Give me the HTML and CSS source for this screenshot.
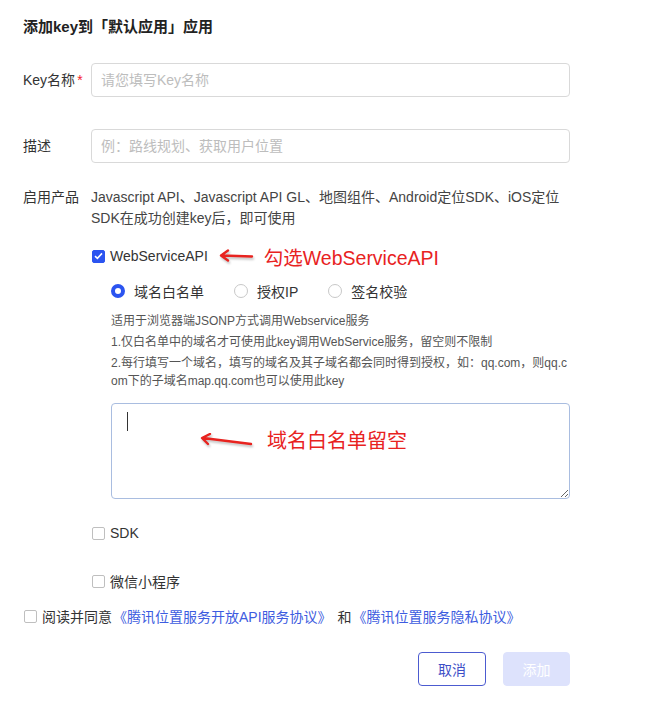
FILE: index.html
```html
<!DOCTYPE html>
<html lang="zh-CN">
<head>
<meta charset="UTF-8" />
<title>添加key</title>
<link rel="stylesheet" href="styles.css">
</head>
<body>

<div class="dialog">
  <h2 class="title">添加key到「默认应用」应用</h2>

  <div class="row row-name">
    <label class="label">Key名称<span class="req">*</span></label>
    <div class="field"><input class="input" type="text" placeholder="请您填写Key名称"></div>
  </div>

  <div class="row row-desc">
    <label class="label">描述</label>
    <div class="field"><input class="input" type="text" placeholder="例：路线规划、获取用户位置"></div>
  </div>

  <div class="row row-prod">
    <label class="label">启用产品</label>
    <div class="field">
      <p class="prod-text">Javascript API、Javascript API GL、地图组件、Android定位SDK、iOS定位SDK在成功创建key后，即可使用</p>

      <div class="check check-ws">
        <span class="box checked"><svg width="9" height="8" viewBox="0 0 9 8"><path d="M1 4.2 L3.4 6.4 L8 1.4" fill="none" stroke="#fff" stroke-width="1.6"/></svg></span>
        <span>WebServiceAPI</span>
        <span class="note note-ws">
          <svg width="36" height="14" viewBox="0 0 36 14"><path d="M34 7.5 L4 6.5 M10 1.5 L3 6.5 L10 11.5" fill="none" stroke="#e8231f" stroke-width="2.4" stroke-linecap="round" stroke-linejoin="round"/></svg>
          <span class="note-text">勾选WebServiceAPI</span>
        </span>
      </div>

      <div class="ws-panel">
        <div class="radios">
          <span class="radio on"></span><span class="radio-label">域名白名单</span>
          <span class="radio"></span><span class="radio-label">授权IP</span>
          <span class="radio"></span><span class="radio-label">签名校验</span>
        </div>
        <p class="tip">适用于浏览器端JSONP方式调用Webservice服务</p>
        <p class="tip">1.仅白名单中的域名才可使用此key调用WebService服务，留空则不限制</p>
        <p class="tip">2.每行填写一个域名，填写的域名及其子域名都会同时得到授权，如：qq.com，则qq.com下的子域名map.qq.com也可以使用此key</p>
        <div class="area-wrap">
          <textarea class="area"></textarea>
          <span class="caret"></span>
          <span class="note note-area">
            <svg width="54" height="14" viewBox="0 0 54 14"><path d="M52 11 L4 5 M11 1 L3 5 L9 11" fill="none" stroke="#e8231f" stroke-width="2.4" stroke-linecap="round" stroke-linejoin="round"/></svg>
            <span class="note-text">域名白名单留空</span>
          </span>
        </div>
      </div>

      <div class="check check-sdk"><span class="box"></span><span>SDK</span></div>
      <div class="check check-mini"><span class="box"></span><span>微信小程序</span></div>
    </div>
  </div>

  <div class="check check-agree">
    <span class="box"></span><span>阅读并同意</span>
    <a class="link" href="#">《腾讯位置服务开放API服务协议》</a>
    <span class="and">和</span>
    <a class="link" href="#">《腾讯位置服务隐私协议》</a>
  </div>

  <div class="actions">
    <button class="btn btn-cancel">取消</button>
    <button class="btn btn-add">添加</button>
  </div>
</div>

</body>
</html>
```

FILE: styles.css
```css
body {
  margin: 0;
  padding: 0;
  background: #fff;
  color: #333;
  font-family: "Liberation Sans", "Noto Sans CJK SC", sans-serif;
  font-size: 14px;
}
.dialog {
  width: 547px;
  padding: 16px 0 0 23px;
}
.title {
  margin: 0;
  font-size: 15px;
  line-height: 22px;
  font-weight: bold;
  color: #222;
}
.row {
  display: flex;
}
.label {
  width: 68px;
  flex: none;
  line-height: 34px;
  color: #333;
}
.req {
  color: #f5222d;
  margin-left: 2px;
}
.field {
  flex: 1;
}
.row-name {
  margin-top: 25px;
}
.row-desc {
  margin-top: 32px;
}
.row-prod {
  margin-top: 24px;
}
.row-prod .label {
  line-height: 21px;
}
.input {
  box-sizing: border-box;
  width: 100%;
  height: 34px;
  border: 1px solid #d9d9d9;
  border-radius: 4px;
  padding: 0 9px;
  font-family: inherit;
  font-size: 14px;
  outline: none;
}
.input::placeholder {
  color: #bdbdbd;
}
.prod-text {
  margin: 0;
  line-height: 21px;
  color: #444;
}
.check {
  display: flex;
  align-items: center;
  height: 20px;
  color: #333;
}
.box {
  box-sizing: border-box;
  width: 13px;
  height: 13px;
  border: 1px solid #bfbfbf;
  border-radius: 2px;
  margin: 0 5px 0 1px;
  display: inline-flex;
  align-items: center;
  justify-content: center;
  flex: none;
}
.box.checked {
  background: #2b54f0;
  border-color: #2b54f0;
}
.check-ws {
  margin-top: 17px;
}
.note {
  display: inline-flex;
  align-items: center;
  color: #e8231f;
}
.note-text {
  font-size: 19.5px;
}
.note-ws {
  margin-left: 10px;
}
.note-ws svg {
  margin-right: 10px;
  filter: drop-shadow(1px 2px 1px rgba(0,0,0,0.25));
}
.ws-panel {
  padding-left: 20px;
}
.radios {
  display: flex;
  align-items: center;
  height: 20px;
  margin-top: 15px;
  margin-bottom: 11px;
}
.radio {
  box-sizing: border-box;
  width: 14px;
  height: 14px;
  border-radius: 50%;
  border: 1px solid #c8c8c8;
  margin-right: 9px;
}
.radio.on {
  border: 4px solid #2b54f0;
}
.radio-label {
  margin-right: 30px;
}
.tip {
  margin: 0 0 3px;
  font-size: 12px;
  line-height: 18px;
  color: #555;
  word-break: break-all;
}
.area-wrap {
  position: relative;
  margin-top: 13px;
}
.area {
  display: block;
  box-sizing: border-box;
  width: 100%;
  height: 96px;
  border: 1px solid #a9bde0;
  border-radius: 4px;
  outline: none;
  font-family: inherit;
}
.caret {
  position: absolute;
  left: 16px;
  top: 9px;
  width: 1px;
  height: 19px;
  background: #333;
}
.note-area {
  position: absolute;
  left: 88px;
  top: 22px;
}
.note-area svg {
  margin-right: 14px;
  filter: drop-shadow(1px 2px 1px rgba(0,0,0,0.25));
}
.note-area .note-text {
  font-size: 20px;
}
.check-sdk {
  margin-top: 24px;
}
.check-mini {
  margin-top: 28px;
}
.check-agree {
  margin-top: 15px;
}
.link {
  color: #3d5ce0;
  text-decoration: none;
  margin-left: 1px;
}
.and {
  margin-left: 6px;
}
.actions {
  display: flex;
  justify-content: flex-end;
  gap: 17px;
  margin-top: 26px;
}
.btn {
  box-sizing: border-box;
  width: 67px;
  height: 34px;
  border-radius: 4px;
  font-family: inherit;
  font-size: 14px;
  cursor: pointer;
}
.btn-cancel {
  width: 68px;
  background: #fff;
  border: 1px solid #4c5bd0;
  color: #3d4fc7;
}
.btn-add {
  background: #dde2fc;
  border: 1px solid #dde2fc;
  color: #fff;
}
```
